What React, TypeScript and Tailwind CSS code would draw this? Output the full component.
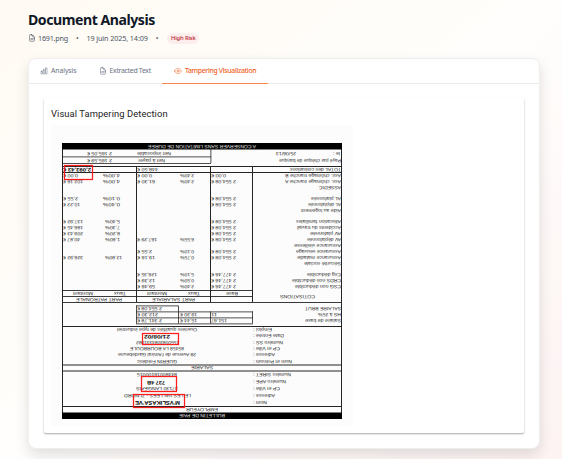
import React from "react";

// Scanned payslip, stored upside down: [text, left, right, centre y, bold?, size?]
type Line = [string, number, number, number, boolean?, number?];

const lines: Line[] = [
  ["TOTAL des cotisations", 290, 341, 169.5],
  ["Ass. chômage tranche B", 285, 341, 176],
  ["Ass. chômage tranche A", 285, 341, 182],
  ["ASSEDIC", 319, 341, 188],
  ["AL plafonnée", 311, 341, 199],
  ["AL déplafonnée", 308, 341, 205],
  ["Aide au logement", 301, 341, 211],
  ["Allocation familiales", 296, 341, 222],
  ["Accidents du travail", 297, 341, 228],
  ["AV plafonnée", 310, 341, 234],
  ["AV déplafonnée", 307, 341, 240],
  ["Assurance vieillesse", 294, 341, 246],
  ["Assurance veuvage", 296, 341, 252],
  ["Assurance maladie", 297, 341, 258],
  ["Sécurité sociale", 304, 341, 264],
  ["Csg déductible", 307, 341, 275],
  ["CRDS non déductible", 292, 341, 281],
  ["CSG non déductible", 295, 341, 287],
  ["COTISATIONS", 280, 315, 296.5],
  ["SALAIRE BRUT", 305, 341, 309],
  ["HS à 25%", 318, 341, 315],
  ["Salaire de base", 305, 341, 321],
  ["Payé par chèque de banque", 279, 341, 160.5],
  ["le :", 333, 340, 154],
  ["25/06/13", 276, 296, 154],
  ["Net imposable", 137, 171, 154],
  ["Net à payer", 138, 165, 160.5],
  ["2 165,05 €", 87, 112, 154],
  ["2 165,59 €", 87, 112, 160.5],
  ["2,093,43 €", 63, 91, 169.5, true],
  ["448,50 €", 137, 158, 169.5],
  ["0,00 €", 63, 78, 176],
  ["4,00%", 103, 120, 176],
  ["0,00 €", 137, 152, 176],
  ["2,40%", 180, 194, 176],
  ["0,00 €", 211, 226, 176],
  ["102,16 €", 63, 83, 182],
  ["4,00%", 103, 120, 182],
  ["61,30 €", 137, 155, 182],
  ["2,40%", 180, 194, 182],
  ["2 554,08 €", 211, 236, 182],
  ["2,55 €", 63, 78, 199],
  ["0,10%", 103, 120, 199],
  ["2 554,08 €", 211, 236, 199],
  ["10,22 €", 63, 80, 205],
  ["0,40%", 103, 120, 205],
  ["2 554,08 €", 211, 236, 205],
  ["137,92 €", 63, 83, 222],
  ["5,40%", 105, 120, 222],
  ["2 554,08 €", 211, 236, 222],
  ["186,45 €", 63, 83, 228],
  ["7,30%", 105, 120, 228],
  ["2 554,08 €", 211, 236, 228],
  ["209,43 €", 63, 83, 234],
  ["8,20%", 105, 120, 234],
  ["2 554,08 €", 211, 236, 234],
  ["40,87 €", 63, 80, 240],
  ["1,60%", 105, 120, 240],
  ["167,29 €", 137, 157, 240],
  ["6,55%", 180, 194, 240],
  ["2 554,08 €", 211, 236, 240],
  ["2,55 €", 137, 152, 252],
  ["0,10%", 180, 194, 252],
  ["2 554,08 €", 211, 236, 252],
  ["326,92 €", 63, 83, 258],
  ["12,80%", 105, 122, 258],
  ["19,16 €", 137, 155, 258],
  ["0,75%", 180, 194, 258],
  ["2 554,08 €", 211, 236, 258],
  ["126,35 €", 137, 157, 275],
  ["5,10%", 180, 194, 275],
  ["2 477,46 €", 211, 236, 275],
  ["12,39 €", 137, 155, 281],
  ["0,50%", 180, 194, 281],
  ["2 477,46 €", 211, 236, 281],
  ["59,46 €", 137, 155, 287],
  ["2,40%", 180, 194, 287],
  ["2 477,46 €", 211, 236, 287],
  ["Montant", 73, 93, 293.3],
  ["Taux", 114, 126, 293.3],
  ["Montant", 147, 167, 293.3],
  ["Taux", 188, 200, 293.3],
  ["Base", 226, 238, 293.3],
  ["PART PATRONALE", 76, 122, 299.5],
  ["PART SALARIALE", 152, 195, 299.5],
  ["2 554,08 €", 137, 162, 308.8],
  ["212,30 €", 137, 158, 314.8],
  ["19,30 €", 180, 197, 314.8],
  ["11", 211, 217, 314.8],
  ["2 341,78 €", 137, 162, 320.8],
  ["15,44 €", 180, 197, 320.8],
  ["151,67", 211, 227, 320.8],
  ["Ouvriers qualifiés de type industriel", 117, 197, 330],
  ["21/08/02", 144, 170, 337, true],
  ["Emploi :", 253, 272, 330],
  ["Date Entrée :", 253, 284, 336],
  ["1550083084331982", 136, 179, 342.5],
  ["Numéro SS :", 253, 283, 342.5],
  ["85458 LA BOURBOULE", 130, 184, 349],
  ["CP et Ville :", 253, 280, 349],
  ["28 Avenue de l'Amiral Gardebeune", 118, 196, 355],
  ["Adresse :", 253, 275, 355],
  ["GUERIN Frédéric", 137, 177, 361.5],
  ["Nom et Prénom :", 253, 292, 361.5],
  ["SALARIE", 191, 213, 368],
  ["84480016100015", 137, 177, 374.5],
  ["Numéro SIRET :", 253, 291, 374.5],
  ["737 4B", 147, 165, 382.5, true],
  ["Numéro APE :", 253, 286, 381.5],
  ["37130 LANGEAIS", 136, 178, 388.7],
  ["CP et Ville :", 253, 280, 388.5],
  ["LE LES VALLEES - ZI NORD", 124, 191, 396],
  ["Adresse :", 253, 275, 396],
  ["M'VSLIKASA'VE", 135, 180, 402.7, true, 5.6],
  ["Nom :", 253, 267, 402.7],
  ["EMPLOYEUR", 186, 218, 409.6],
];

// Black strokes of the form: [x, y, width, height]
const rules: number[][] = [
  [62, 149, 1, 266], [341, 149, 1, 266],
  [62, 156.5, 149, 0.8], [62, 163, 149, 0.8], [210.5, 149, 0.8, 14],
  [62, 166, 280, 1], [62, 172, 280, 1],
  [136, 166, 1, 136], [210, 166, 1, 136], [252, 166, 1, 136],
  [62, 290, 191, 0.9], [62, 296, 191, 0.9], [62, 302, 280, 0.9],
  [136, 305.5, 42, 0.8], [136, 311.5, 117, 0.8], [136, 317.5, 117, 0.8], [136, 323.5, 117, 0.8],
  [136, 305.5, 0.8, 18], [178, 305.5, 0.8, 18], [210, 311.5, 0.8, 12], [252, 311.5, 0.8, 12],
  [62, 326, 280, 1], [62, 364.5, 280, 1], [62, 370.5, 280, 1], [62, 406, 280, 1],
];

const marks: number[][] = [
  [64.5, 165.5, 28, 14], [142.5, 333.5, 36, 11],
  [141.5, 376.5, 35, 15], [133.5, 394.5, 51, 13],
];

// Glyphs are set ten times too large and scaled back, so that their advances stay exact.
function ScanText({ line: [text, left, right, y, bold, size = bold ? 5.2 : 4.8], fill }: { line: Line; fill: string }) {
  return (
    <text
      transform={`translate(${right} ${y - size * 0.34}) rotate(180) scale(0.1)`}
      fontSize={size * 10}
      fontWeight={bold ? 700 : 400}
      textLength={(right - left) * 10}
      lengthAdjust="spacingAndGlyphs"
      textRendering="geometricPrecision"
      fill={fill}
    >
      {text}
    </text>
  );
}

function Scan() {
  return (
    <svg width="302" height="301" viewBox="51 125 302 301" className="block" fontFamily="'Liberation Sans', Arial, sans-serif">
      <rect x="51" y="125" width="302" height="301" fill="#fcfcfc" />
      {rules.map(([x, y, w, h], i) => (
        <rect key={i} x={x} y={y} width={w} height={h} fill="#242424" />
      ))}
      <rect x="62" y="143" width="280" height="6.5" fill="#000" />
      <rect x="62" y="412.5" width="280" height="6.5" fill="#000" />
      {lines.map((line, i) => (
        <ScanText key={i} line={line} fill={line[4] ? "#000" : "#222"} />
      ))}
      <ScanText line={["A CONSERVER SANS LIMITATION DE DUREE", 148, 256, 146.2]} fill="#e6e6e6" />
      <ScanText line={["BULLETIN DE PAIE", 179, 225, 415.8]} fill="#e6e6e6" />
      {marks.map(([x, y, w, h], i) => (
        <rect key={i} x={x} y={y} width={w} height={h} fill="none" stroke="#ff1c1c" strokeWidth="1.25" />
      ))}
    </svg>
  );
}

const stroke = { fill: "none", stroke: "currentColor", strokeWidth: 1.6, strokeLinecap: "round", strokeLinejoin: "round" } as const;

function DocIcon() {
  return (
    <svg viewBox="0 0 24 24" className="size-2 shrink-0" {...stroke}>
      <path d="M10.5 2.25H5.6c-.6 0-1.1.5-1.1 1.1v17.3c0 .6.5 1.1 1.1 1.1h12.8c.6 0 1.1-.5 1.1-1.1v-9.4a9 9 0 0 0-9-9Z" />
      <path d="M19.5 14.25v-2.6a3.4 3.4 0 0 0-3.4-3.4h-1.5a1.1 1.1 0 0 1-1.1-1.1v-1.5a3.4 3.4 0 0 0-3.4-3.4H8.25M8.25 13.5h7.5M8.25 17h7.5" />
    </svg>
  );
}

function ChartIcon() {
  return (
    <svg viewBox="0 0 24 24" className="size-2 shrink-0" {...stroke}>
      <rect x="3" y="12.5" width="4.5" height="8.5" rx="1.1" />
      <rect x="9.75" y="8" width="4.5" height="13" rx="1.1" />
      <rect x="16.5" y="3" width="4.5" height="18" rx="1.1" />
    </svg>
  );
}

function EyeIcon() {
  return (
    <svg viewBox="0 0 24 24" className="size-2 shrink-0" {...stroke}>
      <path d="M2 12.3a1 1 0 0 1 0-.6C3.4 7.5 7.4 4.5 12 4.5s8.6 3 10 7.2a1 1 0 0 1 0 .6c-1.4 4.2-5.4 7.2-10 7.2s-8.6-3-10-7.2Z" />
      <circle cx="12" cy="12" r="3" />
    </svg>
  );
}

export default function App() {
  return (
    <main className="h-[459px] w-[562px] overflow-hidden bg-linear-to-br from-[#fffaf3] via-[#fffefc] to-[#fdf3f3] pt-3 pr-[22px] pl-7 font-['Noto_Sans',sans-serif]">
      <h1 className="h-[17px] text-[14.1px] leading-4 font-bold tracking-[-0.46px] whitespace-nowrap text-[#101828]">Document Analysis</h1>
      <div className="mt-[3px] flex h-3 items-center text-[7.2px] tracking-[-0.15px] whitespace-nowrap text-[#4a5565]">
        <DocIcon />
        <span className="ml-0.5 tracking-[-0.22px]">1691.png</span>
        <span className="ml-2">•</span>
        <span className="ml-2 tracking-[-0.1px]">19 juin 2025, 14:09</span>
        <span className="ml-2">•</span>
        <span className="ml-[9px] flex h-[11px] w-8 items-center justify-center rounded-full bg-[#fdeeee] text-[5.8px] font-medium text-[#b91c2b]">High Risk</span>
      </div>

      <section className="mt-3.5 h-[391px] w-[512px] rounded-lg border border-[#eeeeef] bg-white shadow-[0_6px_14px_rgba(0,0,0,0.12)]">
        <nav className="flex h-[25px] border-b border-[#e9eaec] text-[6.9px] whitespace-nowrap text-[#6a7282]">
          <div className="flex w-[58px] items-center gap-[3px] pl-[11px] tracking-[-0.1px]"><ChartIcon />Analysis</div>
          <div className="flex w-[75px] items-center gap-[3px] pl-[11.5px] tracking-[-0.29px]"><DocIcon />Extracted Text</div>
          <div className="flex h-[25px] w-[106px] items-center gap-[3px] border-b border-[#f5864c] pl-3 font-medium tracking-[-0.33px] text-[#f0601f]"><EyeIcon />Tampering Visualization</div>
        </nav>
        <div className="mt-3.5 ml-[15px] h-[335px] w-[480px] rounded-[2px] bg-white pl-[7px] shadow-[0_1px_2px_rgba(0,0,0,0.35)]">
          <h2 className="h-[27px] pt-2.5 font-['Roboto',sans-serif] text-[9.4px] leading-3 tracking-[0.08px] whitespace-nowrap text-[#222]">Visual Tampering Detection</h2>
          <Scan />
        </div>
      </section>
    </main>
  );
}
